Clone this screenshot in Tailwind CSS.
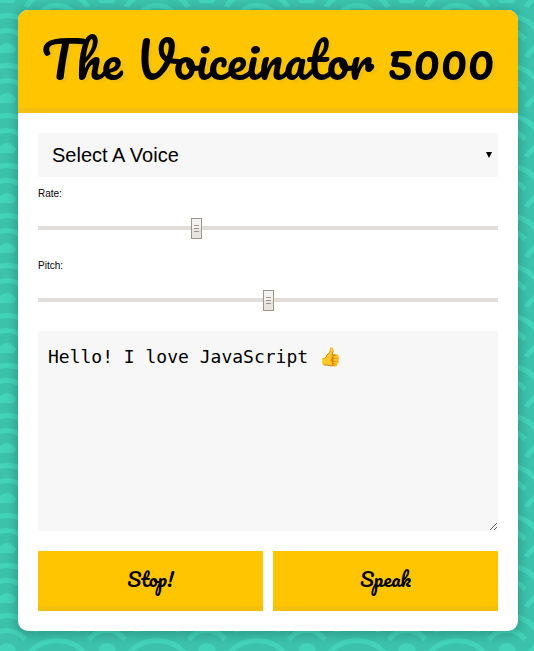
<!DOCTYPE html>
<html lang="en">
<head>
<meta charset="UTF-8">
<meta name="viewport" content="width=device-width, initial-scale=1">
<title>The Voiceinator 5000</title>
<script src="https://cdn.jsdelivr.net/npm/@tailwindcss/browser@4"></script>
</head>
<body class="relative min-h-screen bg-[#3bc1ac] pt-[10px] pr-4 pb-5 pl-[18px] font-['Liberation_Sans',sans-serif] text-[10px] text-black">
<!-- Overlapping wave rings -->
<svg class="absolute inset-0 -z-10 h-full w-full" aria-hidden="true">
  <defs>
    <g id="wave">
      <circle r="50" fill="#3bc1ac"/>
      <circle r="37.5" fill="none" stroke="#42d3ba" stroke-width="5"/>
      <circle r="22.5" fill="none" stroke="#42d3ba" stroke-width="5"/>
      <circle r="10" fill="#42d3ba"/>
    </g>
    <pattern id="waves" width="100" height="50" x="7" y="3" patternUnits="userSpaceOnUse">
      <rect width="100" height="50" fill="#3bc1ac"/>
      <use href="#wave" x="0" y="0"/><use href="#wave" x="100" y="0"/>
      <use href="#wave" x="50" y="25"/>
      <use href="#wave" x="0" y="50"/><use href="#wave" x="100" y="50"/>
      <use href="#wave" x="50" y="75"/>
    </pattern>
  </defs>
  <rect width="100%" height="100%" fill="url(#waves)"/>
</svg>
<main class="mx-auto max-w-[500px] overflow-hidden rounded-[10px] bg-white shadow-[0_2px_8px_3px_rgba(0,0,0,0.16)]">
  <h1 class="border-b-5 border-[#f3c010] bg-[#ffc600] pt-4 pb-4 text-center font-[Pacifico,cursive] text-[50px] leading-[66px] whitespace-nowrap [text-shadow:3px_3px_0_#f3c010]">The Voiceinator 5000</h1>
  <form class="flex flex-col p-5">
    <div class="relative">
      <select aria-label="Voice" class="block h-11 w-full appearance-none bg-[#f7f7f7] px-[14px] text-[20px]">
        <option>Select A Voice</option>
      </select>
      <svg class="pointer-events-none absolute top-[19px] right-[6px] h-[6px] w-[6px]" viewBox="0 0 6 6" aria-hidden="true"><path d="M0 0h6L3 6z"/></svg>
    </div>
    <label for="rate" class="mt-2 leading-[18px]">Rate:</label>
    <input id="rate" type="range" min="0" max="3" step="0.01" value="1.02" class="mt-[14px] h-[21px] w-full appearance-none bg-transparent [&::-webkit-slider-runnable-track]:h-1 [&::-webkit-slider-runnable-track]:bg-[#e2ddd8] [&::-webkit-slider-thumb]:-mt-2 [&::-webkit-slider-thumb]:h-[21px] [&::-webkit-slider-thumb]:w-[11px] [&::-webkit-slider-thumb]:appearance-none [&::-webkit-slider-thumb]:border [&::-webkit-slider-thumb]:border-[#9c958c] [&::-webkit-slider-thumb]:[background:linear-gradient(#9c958c,#9c958c)_2px_6px/5px_1px_no-repeat,linear-gradient(#9c958c,#9c958c)_2px_9px/5px_1px_no-repeat,linear-gradient(#9c958c,#9c958c)_2px_12px/5px_1px_no-repeat,linear-gradient(#f4f2ef_50%,#e9e4df_50%)]">
    <label for="pitch" class="mt-[19px] leading-[18px]">Pitch:</label>
    <input id="pitch" type="range" min="0" max="2" step="0.1" value="1" class="mt-[14px] h-[21px] w-full appearance-none bg-transparent [&::-webkit-slider-runnable-track]:h-1 [&::-webkit-slider-runnable-track]:bg-[#e2ddd8] [&::-webkit-slider-thumb]:-mt-2 [&::-webkit-slider-thumb]:h-[21px] [&::-webkit-slider-thumb]:w-[11px] [&::-webkit-slider-thumb]:appearance-none [&::-webkit-slider-thumb]:border [&::-webkit-slider-thumb]:border-[#9c958c] [&::-webkit-slider-thumb]:[background:linear-gradient(#9c958c,#9c958c)_2px_6px/5px_1px_no-repeat,linear-gradient(#9c958c,#9c958c)_2px_9px/5px_1px_no-repeat,linear-gradient(#9c958c,#9c958c)_2px_12px/5px_1px_no-repeat,linear-gradient(#f4f2ef_50%,#e9e4df_50%)]">
    <textarea aria-label="Text to speak" class="mt-[21px] block h-[200px] w-full resize bg-[#f7f7f7] p-[10px] font-['DejaVu_Sans_Mono',monospace] text-[18px] leading-8">Hello! I love JavaScript 👍</textarea>
    <div class="mt-5 grid grid-cols-2 gap-[10px]">
      <button type="button" class="h-[60px] border-b-5 border-[#f3c010] bg-[#ffc600] font-[Pacifico,cursive] text-[20px]">Stop!</button>
      <button type="button" class="h-[60px] border-b-5 border-[#f3c010] bg-[#ffc600] font-[Pacifico,cursive] text-[20px]">Speak</button>
    </div>
  </form>
</main>
</body>
</html>
